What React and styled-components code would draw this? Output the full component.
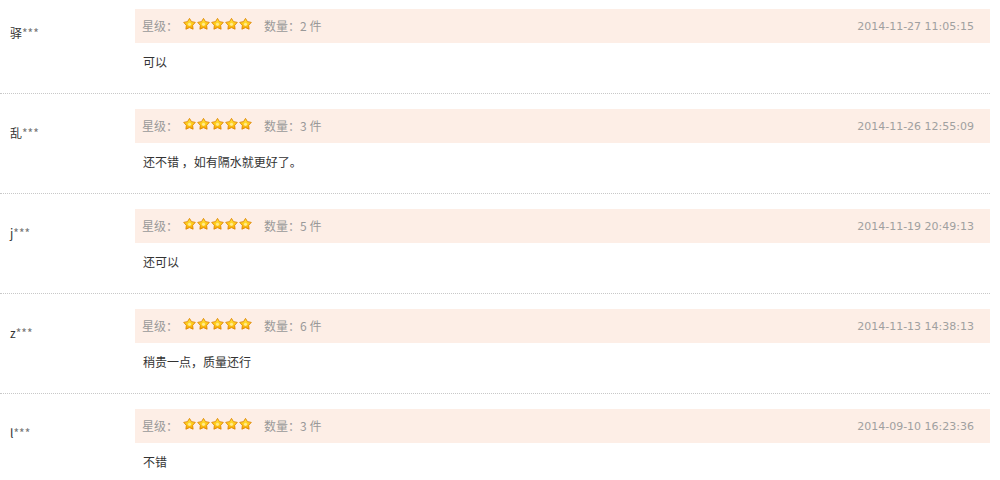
import React from "react";
import styled, { createGlobalStyle } from "styled-components";

const Global = createGlobalStyle`
  html, body { margin: 0; padding: 0; background: #fff; }
  body { font-family: "Noto Sans CJK SC", "Liberation Sans", sans-serif; font-size: 12px; color: #333; }
`;

const List = styled.div`
  width: 990px;
`;

const Row = styled.div`
  display: grid;
  grid-template-columns: 135px 1fr;
  padding-top: ${(p) => (p.$first ? 9 : 15)}px;
  border-bottom: 1px dotted #c8c8c8;
`;

const Name = styled.div`
  padding: 15px 0 0 10px;
  line-height: 18px;
  color: #333;
`;

const Mask = styled.span`
  color: #777;
`;

const Body = styled.div`
  display: flex;
  flex-direction: column;
`;

const Bar = styled.div`
  height: 34px;
  background: #fdeee6;
  display: flex;
  align-items: center;
  padding: 0 16px 0 7px;
  color: #999;
`;

const Label = styled.span`
  line-height: 18px;
`;

const Stars = styled.span`
  display: inline-flex;
  gap: 1px;
  margin: 0 12px 0 5px;
  position: relative;
  top: -2px;
`;

const Date = styled.span`
  margin-left: auto;
  font-family: "DejaVu Sans", sans-serif;
  font-size: 11px;
  color: #a0a0a0;
`;

const Content = styled.div`
  padding: 10px 0 22px 8px;
  line-height: 18px;
  color: #333;
`;

const Star = () => (
  <svg width="13" height="12" viewBox="0 0 13 12">
    <defs>
      <linearGradient id="sg" x1="0" y1="0" x2="0" y2="1">
        <stop offset="0" stopColor="#ffe640" />
        <stop offset="0.6" stopColor="#ffc814" />
        <stop offset="1" stopColor="#f2a000" />
      </linearGradient>
    </defs>
    <path
      d="M6.5 0.4 L8.44 3.63 L12.3 4.38 L9.64 7.32 L10.1 11.2 L6.5 9.6 L2.9 11.2 L3.36 7.32 L0.7 4.38 L4.56 3.63 Z"
      fill="url(#sg)"
      stroke="#e08600"
      strokeWidth="0.9"
      strokeLinejoin="round"
    />
    <circle cx="6.5" cy="6.3" r="1.6" fill="#fff3a8" opacity="0.8" />
  </svg>
);

const data = [
  { name: "驿", qty: 2, date: "2014-11-27 11:05:15", text: "可以" },
  { name: "乱", qty: 3, date: "2014-11-26 12:55:09", text: "还不错 ，如有隔水就更好了。" },
  { name: "j", qty: 5, date: "2014-11-19 20:49:13", text: "还可以" },
  { name: "z", qty: 6, date: "2014-11-13 14:38:13", text: "稍贵一点，质量还行" },
  { name: "l", qty: 3, date: "2014-09-10 16:23:36", text: "不错" },
];

export default function App() {
  return (
    <>
      <Global />
      <List>
        {data.map((r, i) => (
          <Row key={i} $first={i === 0}>
            <Name>
              {r.name}
              <Mask>***</Mask>
            </Name>
            <Body>
              <Bar>
                <Label>星级：</Label>
                <Stars>
                  {[0, 1, 2, 3, 4].map((k) => (
                    <Star key={k} />
                  ))}
                </Stars>
                <Label>数量：{r.qty} 件</Label>
                <Date>{r.date}</Date>
              </Bar>
              <Content>{r.text}</Content>
            </Body>
          </Row>
        ))}
      </List>
    </>
  );
}
